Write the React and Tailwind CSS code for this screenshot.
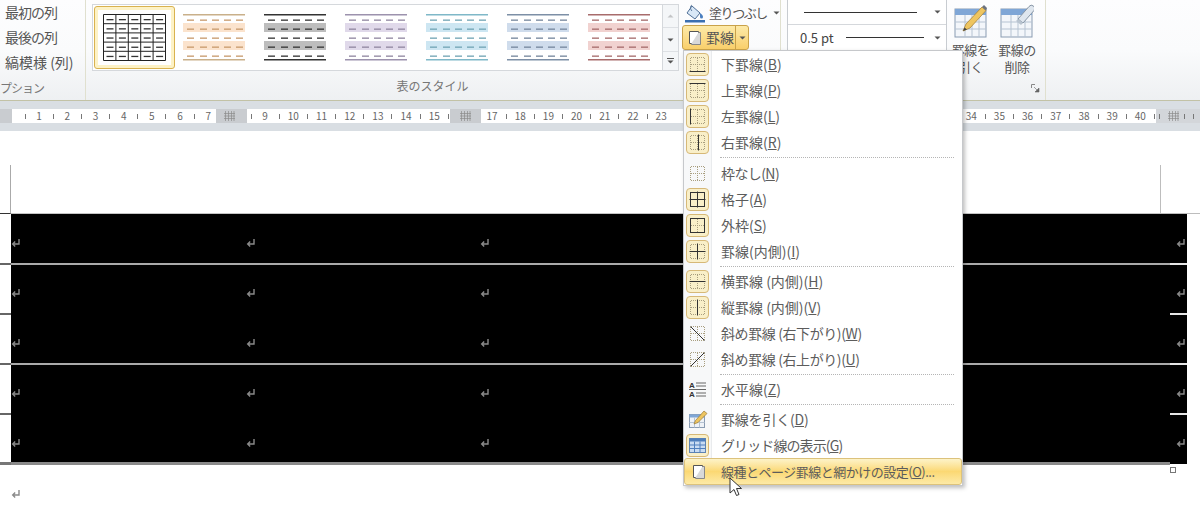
import React from 'react';

const jp = "font-['Noto_Sans_CJK_JP','Liberation_Sans',sans-serif]";

function Swatch({ line, band, dash }) {
  const rows = [5, 14, 23, 32, 41];
  return (
    <svg width="63" height="47" viewBox="0 0 63 47" className="shrink-0">
      <rect x="0" y="9" width="62" height="9" fill={band} />
      <rect x="0" y="27" width="62" height="9" fill={band} />
      <rect x="0" y="0" width="62" height="1.5" fill={line} />
      <rect x="0" y="45" width="62" height="1.5" fill={line} />
      {rows.map((y) =>
        [4, 17, 29, 41, 53].map((x) => (
          <rect key={x + '-' + y} x={x} y={y + 0.5} width="7" height="1.3" fill={dash} />
        ))
      )}
    </svg>
  );
}

function GridSwatch() {
  const xs = [0, 12.4, 24.8, 37.2, 49.6, 62];
  const ys = [0, 9.2, 18.4, 27.6, 36.8, 46];
  return (
    <svg width="63" height="47" viewBox="-0.5 -0.5 63 47" className="shrink-0">
      {xs.map((x) => <line key={x} x1={x} x2={x} y1="0" y2="46" stroke="#222" strokeWidth="1" />)}
      {ys.map((y) => <line key={y} x1="0" x2="62" y1={y} y2={y} stroke="#222" strokeWidth="1" />)}
      {xs.slice(0, 5).map((x) =>
        ys.slice(0, 5).map((y) => (
          <rect key={x + '-' + y} x={x + 3} y={y + 4.5} width="7" height="1.3" fill="#333" />
        ))
      )}
    </svg>
  );
}

function Caret({ className = '' }) {
  return (
    <svg width="7" height="4" viewBox="0 0 7 4" className={className}>
      <path d="M0.5 0.5h6L3.5 3.5z" fill="#555" />
    </svg>
  );
}

function TableIcon({ kind }) {
  return (
    <svg width="34" height="34" viewBox="0 0 34 34">
      <rect x="1" y="5" width="31" height="28" fill="#f3f6fa" stroke="#8a9cb2" />
      <rect x="1" y="5" width="31" height="6" fill="#7fa6d6" />
      {[11, 18, 25].map((x) => <line key={x} x1={x} x2={x} y1="11" y2="33" stroke="#b6c3d2" />)}
      {[18, 25].map((y) => <line key={y} x1="1" x2="32" y1={y} y2={y} stroke="#b6c3d2" />)}
      {kind === 'pencil' ? (
        <g>
          <path d="M9 27l3-7L28 3l4 3.500L16 24z" fill="#eec560" stroke="#a8843a" strokeWidth="0.8" />
          <path d="M28 3l2-2 3 3-1 2.500z" fill="#6d7480" />
          <path d="M9 27l1.500-3.500 2.500 2z" fill="#444" />
        </g>
      ) : (
        <g>
          <path d="M18 15L29 2.500a3 3 0 0 1 5 4L23 19z" fill="#dfe6ee" stroke="#8795a5" />
          <path d="M18 15l5 4-2 2-5-4z" fill="#b9c4d0" />
        </g>
      )}
    </svg>
  );
}

function ReturnMark() {
  return (
    <svg width="10" height="10" viewBox="0 0 10 10" className="shrink-0">
      <path d="M8 1v5H2M4.200 3.600L1.700 6l2.500 2.400" fill="none" stroke="#8a8a8a" strokeWidth="1.400" />
    </svg>
  );
}

function BorderGlyph({ kind }) {
  const solid = '#333';
  const strong = ['all', 'outer', 'inner'].includes(kind);
  return (
    <svg width="17" height="17" viewBox="0 0 17 17">
      <path d="M2 1.500h13M2 15.500h13M1.500 2v13M15.500 2v13M8.500 2v13M2 8.500h13" fill="none" stroke="#a99f80" strokeWidth="1" strokeDasharray="1 1" />
      {kind === 'bottom' && <path d="M0.500 15.500h16" stroke={solid} />}
      {kind === 'top' && <path d="M0.500 1.500h16" stroke={solid} />}
      {kind === 'left' && <path d="M1.500 0.500v16" stroke={solid} />}
      {kind === 'right' && <path d="M9.500 0.500v16" stroke={solid} />}
      {kind === 'h' && <path d="M0.500 8.500h16" stroke={solid} />}
      {kind === 'v' && <path d="M8.500 0.500v16" stroke={solid} />}
      {strong && kind !== 'inner' && <rect x="1.500" y="1.500" width="14" height="14" fill="none" stroke={solid} />}
      {(kind === 'all' || kind === 'inner') && <path d="M8.500 0.500v16M0.500 8.500h16" stroke={solid} />}
      {kind === 'down' && <path d="M1.500 1.500l14 14" stroke={solid} />}
      {kind === 'up' && <path d="M1.500 15.500l14-14" stroke={solid} />}
    </svg>
  );
}

function DocGlyph() {
  return (
    <svg width="14" height="15" viewBox="0 0 14 15">
      <path d="M1.500 1.500h9v12h-9z" fill="#fff" stroke="#555" />
      <path d="M10.500 2.500h2v12h-9v-1" fill="#d8d8d8" stroke="#888" />
    </svg>
  );
}

function HorizontalGlyph() {
  return (
    <svg width="18" height="17" viewBox="0 0 18 17">
      <text x="0" y="7" fontSize="8" fontWeight="700" fill="#333" fontFamily="Liberation Sans">A</text>
      <text x="0" y="16" fontSize="8" fontWeight="700" fill="#333" fontFamily="Liberation Sans">A</text>
      <path d="M7 2h10M7 5h10M0 8.500h17M7 12h10M7 15h10" stroke="#666" />
    </svg>
  );
}

function DrawGlyph() {
  return (
    <svg width="20" height="20" viewBox="0 0 20 20">
      <rect x="1.500" y="5.500" width="15" height="13" fill="#eef2f7" stroke="#8a9cb2" />
      <rect x="1.500" y="5.500" width="15" height="3" fill="#7fa6d6" />
      <path d="M6.500 8.500v10M11.500 8.500v10M1.500 13.500h15" stroke="#b6c3d2" />
      <path d="M6 15l1.500-3.500L16 2l3 2.500-9 9z" fill="#eec560" stroke="#9a7a35" strokeWidth="0.7" />
    </svg>
  );
}

function GridGlyph() {
  return (
    <svg width="17" height="15" viewBox="0 0 17 15">
      <rect x="0.500" y="0.500" width="16" height="14" fill="#c9dcf2" stroke="#5f83b2" />
      <rect x="0.500" y="0.500" width="16" height="3" fill="#4f7fbd" />
      <path d="M5.500 3.500v11M11 3.500v11M0.500 7h16M0.500 10.500h16" stroke="#4f7fbd" />
    </svg>
  );
}

function MenuRow({ glyph, active, label, keyName, tracking = 'tracking-normal' }) {
  return (
    <div className="flex h-[26px] items-stretch">
      <div className="flex w-[28px] shrink-0 items-center justify-center border-r border-[#e9ebed] bg-[#f7f8f9]">
        <div className={`flex h-[23px] w-[23px] items-center justify-center rounded-[4px] ${active ? 'border border-[#d6b877] bg-[#f9efc8]' : ''}`}>
          {glyph}
        </div>
      </div>
      <div className={`flex items-center whitespace-pre pl-[9px] text-[14px] text-[#5c5c5c] ${tracking}`}>
        {label}(<span className="underline">{keyName}</span>)
      </div>
    </div>
  );
}

function MenuSep({ h }) {
  return (
    <div className={`flex items-center ${h}`}>
      <div className="h-full w-[28px] shrink-0 border-r border-[#e9ebed] bg-[#f7f8f9]" />
      <div className="mx-[8px] flex-1 border-t border-dotted border-[#b5b5b5]" />
    </div>
  );
}

function Tick() {
  return <span className="block h-[5px] w-px bg-[#777]" />;
}

function GridMark() {
  return (
    <svg width="11" height="10" viewBox="0 0 11 10">
      <path d="M1.500 0v10M4.500 0v10M7.500 0v10M10 0v10M0 2.500h11M0 5h11M0 7.500h11" stroke="#8b8b8b" strokeWidth="0.7" />
    </svg>
  );
}

function RulerCells({ items }) {
  return items.map((it, i) => (
    <span key={i} className="flex w-[14.1px] shrink-0 items-center justify-center">
      {it === '|' ? <Tick /> : it}
    </span>
  ));
}

function withTicks(from, to) {
  const out = [];
  for (let n = from; n <= to; n++) out.push('|', n);
  return out;
}

function Ruler() {
  // numbers 24 to 33 are covered by the open menu
  const third = [];
  for (let n = 17; n <= 40; n++) third.push(n >= 24 && n <= 33 ? '' : n, n >= 23 && n <= 33 ? '' : '|');
  return (
    <div className="h-[31px] border-t border-[#c2c2a6] bg-[#d9dee3] pt-[8px]">
      <div className="flex h-[14px] overflow-hidden bg-white text-[10px] leading-none text-[#666]">
        <div className="w-[12px] shrink-0 bg-[#c9ccd0]" />
        <div className="flex w-[204px] shrink-0 pl-[6px]"><RulerCells items={withTicks(1, 7)} /></div>
        <div className="flex w-[31px] shrink-0 items-center justify-center bg-[#c9ccd0] pr-[4px]"><GridMark /></div>
        <div className="flex w-[203px] shrink-0 overflow-hidden">
          <div className="flex -ml-[3px]"><RulerCells items={[...withTicks(9, 15), '|']} /></div>
        </div>
        <div className="flex w-[31px] shrink-0 items-center justify-center bg-[#c9ccd0]"><GridMark /></div>
        <div className="flex w-[675px] shrink-0 pl-[4px]"><RulerCells items={third} /></div>
        <div className="flex flex-1 items-center bg-[#d3d6da] pl-[3px]">
          <Tick />
          <span className="ml-[8px]"><GridMark /></span>
          <span className="ml-[5px]"><Tick /></span>
          <span className="ml-[8px]"><Tick /></span>
          <span className="ml-[7px]">4</span>
        </div>
      </div>
    </div>
  );
}

function Ribbon() {
  return (
    <div className="flex h-[100px] bg-gradient-to-b from-[#fdfdfe] via-[#fafbfc] to-[#eef0f2] text-[#555]">
      {/* Table style options */}
      <div className="flex w-[86px] shrink-0 flex-col border-r border-[#e0e0cf] pb-[3px]">
        <div className="flex flex-1 flex-col pl-[5px] text-[14px] leading-[25px]">
          <span className="tracking-[-1px]">最初の列</span>
          <span className="tracking-[-1px]">最後の列</span>
          <span>縞模様 (列)</span>
        </div>
        <span className="text-[12px] leading-[18px] tracking-[-1px] text-[#777]">プション</span>
      </div>

      {/* Gallery */}
      <div className="flex w-[695px] shrink-0 flex-col border-r border-[#e0e0cf]">
        <div className="ml-[6px] mt-[4px] flex h-[67px] w-[587px] border border-[#d5d8dc] bg-white">
          <div className="flex flex-1 items-center pl-[1px]">
            <div className="flex h-[63px] w-[81px] shrink-0 items-center justify-center rounded-[3px] border border-[#d9b24f] bg-[#fdf2c6]">
              <div className="flex h-[55px] w-[73px] items-center justify-center bg-white"><GridSwatch /></div>
            </div>
            <div className="flex flex-1 gap-[18px] pl-[8px]">
              <Swatch line="#c9b08a" band="#fbe3cd" dash="#c79a6c" />
              <Swatch line="#333" band="#bdbdbd" dash="#333" />
              <Swatch line="#9c92ad" band="#e0d9ea" dash="#8f86a0" />
              <Swatch line="#7fb8c8" band="#cde6f2" dash="#70a3b3" />
              <Swatch line="#7d8fa6" band="#cfdcec" dash="#74869c" />
              <Swatch line="#a86c6c" band="#f1d2d0" dash="#a56a6a" />
            </div>
          </div>
          <div className="flex w-[16px] shrink-0 flex-col border-l border-[#d5d8dc] bg-[#f4f6f8]">
            <div className="flex h-[23px] items-center justify-center border-b border-[#dde0e4]"><Caret className="rotate-180 opacity-30" /></div>
            <div className="flex h-[24px] items-center justify-center border-b border-[#dde0e4]"><Caret /></div>
            <div className="flex flex-1 flex-col items-center justify-center gap-[1px]"><span className="h-px w-[7px] bg-[#555]" /><Caret /></div>
          </div>
        </div>
        <div className="flex w-[688px] flex-1 items-center justify-center pl-[5px] pt-[1px] text-[12px] text-[#777]">
          表のスタイル
        </div>
      </div>

      {/* Borders group */}
      <div className="flex w-[265px] shrink-0 border-r border-[#e0e0cf]">
        <div className="ml-[6px] flex h-[51px] w-[160px] shrink-0 flex-col border border-t-0 border-[#c8ccd1] bg-white text-[14px] text-[#444]">
          <div className="flex h-[25px] items-center border-b border-[#d5d8dc] pl-[16px] pr-[5px]">
            <span className="h-px w-[113px] bg-[#333]" />
            <Caret className="ml-auto" />
          </div>
          <div className="flex flex-1 items-center pl-[12px] pr-[5px]">
            <span className="text-[13px]">0.5 pt</span>
            <span className="ml-[12px] h-px w-[78px] bg-[#333]" />
            <Caret className="ml-auto" />
          </div>
        </div>
        <div className="flex w-[47px] shrink-0 flex-col items-center pt-[4px]">
          <TableIcon kind="pencil" />
          <span className="mt-[3px] text-center text-[13px] leading-[17px] tracking-[-0.5px]">罫線を<br />引く</span>
        </div>
        <div className="flex w-[46px] shrink-0 flex-col items-center pt-[4px]">
          <TableIcon kind="eraser" />
          <span className="mt-[3px] text-center text-[13px] leading-[17px] tracking-[-0.5px]">罫線の<br />削除</span>
        </div>
        <div className="-ml-[10px] flex w-[15px] shrink-0 items-end justify-end pb-[7px] pr-[5px]">
          <svg width="9" height="9" viewBox="0 0 9 9">
            <path d="M0.500 4V0.500H4" fill="none" stroke="#888" />
            <path d="M3 3l4 4M8 4v4H4z" fill="#666" stroke="#666" strokeWidth="0.6" />
          </svg>
        </div>
      </div>
      <div className="flex-1" />
    </div>
  );
}

function TableRow({ line }) {
  const cells = [235, 234, 234, 234, 226];
  const last = line === 'last';
  return (
    <div className="flex h-[50px] shrink-0">
      <div className="flex w-[11px] shrink-0 items-end">
        <div className={`relative z-10 w-full ${last ? '-mb-[1px] h-[3px] bg-[#777]' : '-mb-[1px] h-[2px] bg-[#666]'}`} />
      </div>
      <div className="flex w-[1176px] shrink-0 flex-col bg-black">
        <div className="flex min-h-0 flex-1 pt-[24px]">
          {cells.map((w, i) => (
            <div key={i} className="shrink-0" style={{ width: w }}><ReturnMark /></div>
          ))}
          <div className="pl-[2px]"><ReturnMark /></div>
        </div>
        <div className={`relative z-10 -mb-[1px] flex ${last ? 'h-[3px]' : 'h-[2px]'}`}>
          <div className={`w-[1159px] ${line === 'full' ? 'bg-[#aaa]' : last ? 'bg-[#8a8a8a]' : ''}`} />
          <div className={`flex-1 ${last ? '' : 'bg-[#e6e6e6]'}`} />
        </div>
      </div>
    </div>
  );
}

function BorderMenu() {
  return (
    <div className="absolute left-[683px] top-[50px] z-20 flex w-[280px] flex-col border border-[#c6c8cb] bg-white shadow-[2px_2px_4px_rgba(0,0,0,0.25)]">
      <MenuRow active glyph={<BorderGlyph kind="bottom" />} label="下罫線" keyName="B" />
      <MenuRow active glyph={<BorderGlyph kind="top" />} label="上罫線" keyName="P" />
      <MenuRow active glyph={<BorderGlyph kind="left" />} label="左罫線" keyName="L" />
      <MenuRow active glyph={<BorderGlyph kind="right" />} label="右罫線" keyName="R" />
      <MenuSep h="h-[5px]" />
      <MenuRow glyph={<BorderGlyph kind="none" />} label="枠なし" keyName="N" tracking="tracking-[-0.6px]" />
      <MenuRow active glyph={<BorderGlyph kind="all" />} label="格子" keyName="A" />
      <MenuRow active glyph={<BorderGlyph kind="outer" />} label="外枠" keyName="S" />
      <MenuRow active glyph={<BorderGlyph kind="inner" />} label="罫線(内側)" keyName="I" />
      <MenuSep h="h-[4px]" />
      <MenuRow active glyph={<BorderGlyph kind="h" />} label="横罫線 (内側)" keyName="H" />
      <MenuRow active glyph={<BorderGlyph kind="v" />} label="縦罫線 (内側)" keyName="V" />
      <MenuRow glyph={<BorderGlyph kind="down" />} label="斜め罫線 (右下がり)" keyName="W" tracking="tracking-[-0.4px]" />
      <MenuRow glyph={<BorderGlyph kind="up" />} label="斜め罫線 (右上がり)" keyName="U" tracking="tracking-[-0.4px]" />
      <MenuSep h="h-[4px]" />
      <MenuRow glyph={<HorizontalGlyph />} label="水平線" keyName="Z" />
      <MenuSep h="h-[4px]" />
      <MenuRow glyph={<DrawGlyph />} label="罫線を引く" keyName="D" tracking="tracking-[-0.2px]" />
      <MenuRow active glyph={<GridGlyph />} label="グリッド線の表示" keyName="G" tracking="tracking-[-0.9px]" />
      <div className="flex h-[27px] items-center rounded-[3px] border border-[#dcc27c] bg-gradient-to-b from-[#fdf3c8] via-[#fbd873] to-[#fdeaa6]">
        <div className="flex w-[27px] shrink-0 items-center justify-center"><DocGlyph /></div>
        <div className="whitespace-pre pl-[9px] text-[13px] tracking-[-0.5px] text-[#5c5c5c]">
          線種とページ罫線と網かけの設定(<span className="underline">O</span>)...
        </div>
      </div>
    </div>
  );
}

export default function App() {
  const rows = ['full', 'short', 'full', 'short', 'last'];
  return (
    <div className={`relative h-[521px] w-[1200px] overflow-hidden bg-white ${jp}`}>
      <Ribbon />
      <Ruler />

      {/* Document page */}
      <div className="flex flex-col">
        <div className="flex h-[83px] items-end justify-between">
          <div className="flex flex-1 items-end">
            <div className="h-[49px] w-[11px] shrink-0 border-r border-b border-r-[#aaa] border-b-[#333]" />
            <div className="h-px flex-1 bg-[#c4c4c4]" />
          </div>
          <div className="h-[49px] w-[40px] shrink-0 border-l border-b border-[#bdbdbd]" />
        </div>
        {rows.map((line, i) => <TableRow key={i} line={line} />)}
        <div className="flex items-start justify-between">
          <div className="pl-[11px] pt-[25px]"><ReturnMark /></div>
          <div className="mr-[24px] mt-[3px] h-[6px] w-[6px] border border-[#777] bg-white" />
        </div>
      </div>

      {/* Fill and border buttons sit in the ribbon, the open menu hangs from them */}
      <div className="absolute left-[682px] top-[2px] flex h-[22px] items-center text-[13px] tracking-[-1.500px] text-[#555]">
        <svg width="22" height="19" viewBox="0 0 22 19" className="ml-[3px] mr-[2px]">
          <path d="M7 2l8 7-5 6-8-6z" fill="#d9e8f7" stroke="#4f6f96" />
          <path d="M7 1c-2 1-2 4 0 6" fill="none" stroke="#4f6f96" />
          <path d="M15 9c2 1 3 3 3 4a1.500 1.500 0 0 1-3 0c0-1 0-2 0-4z" fill="#4a7fc0" />
          <rect x="0" y="16" width="20" height="2.500" fill="#3b6fb0" />
        </svg>
        <span>塗りつぶし</span>
        <Caret className="ml-[6px]" />
      </div>
      <div className="absolute left-[682px] top-[25px] z-30 flex h-[25px] w-[67px] items-center rounded-[3px] border border-[#c9a24a] bg-gradient-to-b from-[#fdeaa8] to-[#f9cf6a] text-[14px] text-[#555]">
        <div className="flex flex-1 items-center gap-[4px] pl-[5px]">
          <DocGlyph />
          <span>罫線</span>
        </div>
        <div className="flex h-full w-[13px] items-center justify-center border-l border-[#c9a24a]"><Caret /></div>
      </div>

      <BorderMenu />

      {/* Mouse pointer */}
      <svg width="16" height="21" viewBox="0 0 16 21" className="absolute left-[729px] top-[477px] z-30">
        <path d="M1 1v15l4-3.500 2.500 6 2.500-1-2.500-6h5z" fill="#fff" stroke="#333" strokeWidth="1" />
      </svg>
    </div>
  );
}
